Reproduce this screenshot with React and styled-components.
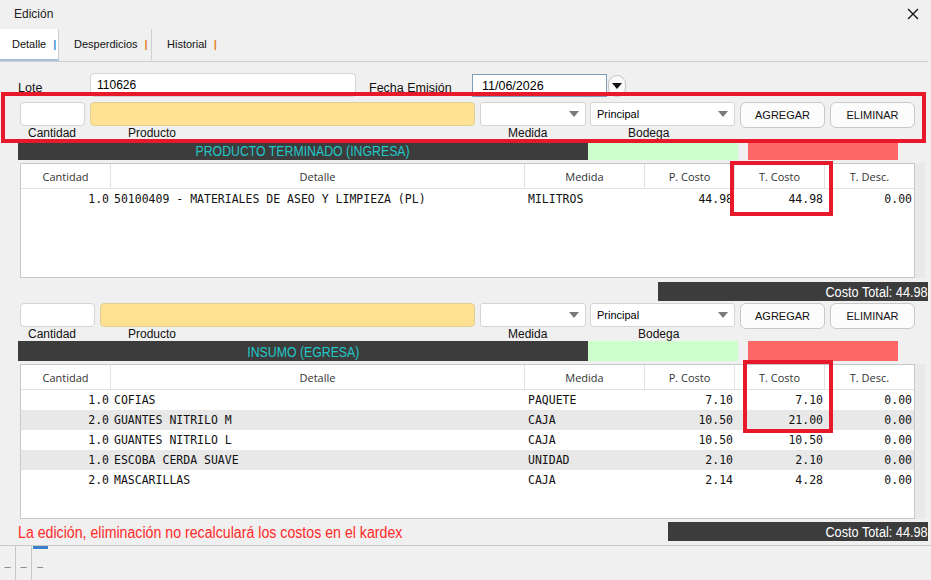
import React from 'react';
import styled, { createGlobalStyle } from 'styled-components';

const GlobalStyle = createGlobalStyle`
  body {
    margin: 0;
    background: #f0f0f0;
    font-family: "Liberation Sans", Arial, sans-serif;
  }
`;

const Window = styled.div`
  position: relative;
  width: 931px;
  height: 580px;
  overflow: hidden;
  background: #f0f0f0;
  color: #000;
`;

const TitleBar = styled.div`
  height: 29px;
  display: flex;
  align-items: center;
  justify-content: space-between;
  padding: 0 12px 2px 14px;
  box-sizing: border-box;
  font-size: 12px;
  color: #222;
`;

const TabBar = styled.div`
  height: 33px;
  margin-right: 3px;
  display: flex;
  border-bottom: 1px solid #cfcfcf;
  box-sizing: border-box;
`;

const Tab = styled.div`
  width: ${p => p.w}px;
  display: flex;
  align-items: center;
  padding-left: ${p => p.pl}px;
  box-sizing: border-box;
  font-size: 11px;
  color: #111;
  background: ${p => (p.active ? '#fff' : 'transparent')};
  border-right: ${p => (p.sep ? '1px solid #cfcfcf' : 'none')};
  border-bottom: ${p => (p.active ? '2px solid #a3c0dd' : '2px solid transparent')};
`;

const TabMark = styled.span`
  margin-left: 7px;
  color: ${p => p.color};
  font-weight: bold;
`;

const Content = styled.div`
  padding: 0 0 0 18px;
`;

const LoteRow = styled.div`
  display: flex;
  align-items: flex-end;
  margin-top: 10px;
  height: 25px;
`;

const Label = styled.div`
  font-size: 12.5px;
  color: #111;
  width: ${p => p.w}px;
  margin-left: ${p => p.ml || 0}px;
  padding-bottom: 2px;
`;

const TextInput = styled.div`
  width: ${p => p.w}px;
  height: 24px;
  box-sizing: border-box;
  background: ${p => p.bg || '#fff'};
  border: 1px solid ${p => p.border || '#d4d4d4'};
  border-radius: 4px;
  font-size: 12px;
  display: flex;
  align-items: center;
  padding-left: 6px;
`;

const DateBox = styled.div`
  display: flex;
  align-items: center;
  margin-left: 19px;
  gap: 1px;
`;

const DateInput = styled.div`
  width: 135px;
  height: 23px;
  box-sizing: border-box;
  background: #fff;
  border: 1px solid #7f9db9;
  font-size: 12.5px;
  display: flex;
  align-items: center;
  padding-left: 9px;
`;

const DateButton = styled.div`
  width: 18px;
  height: 22px;
  box-sizing: border-box;
  border: 1px solid #c4c4c4;
  border-radius: 9px;
  background: #fafafa;
  display: flex;
  align-items: center;
  justify-content: center;
`;

const EntryRow = styled.div`
  display: flex;
  align-items: flex-start;
  margin-top: ${p => p.mt}px;
  padding-left: 2px;
  height: 38px;
`;

const Field = styled.div`
  display: flex;
  flex-direction: column;
  margin-right: ${p => p.mr}px;
`;

const FieldLabel = styled.div`
  font-size: 12px;
  color: #111;
  padding-left: ${p => p.pl}px;
  margin-top: 1px;
  line-height: 13px;
`;

const Select = styled.div`
  width: ${p => p.w}px;
  height: 24px;
  box-sizing: border-box;
  background: #fff;
  border: 1px solid #d4d4d4;
  border-radius: 3px;
  font-size: 11px;
  display: flex;
  align-items: center;
  padding: 0 6px 0 6px;
  &::after {
    content: '';
    margin-left: auto;
    border-left: 5px solid transparent;
    border-right: 5px solid transparent;
    border-top: 6px solid #7a7a7a;
  }
`;

const Button = styled.div`
  width: 85px;
  height: 26px;
  box-sizing: border-box;
  margin-right: 5px;
  border: 1px solid #c8c8c8;
  border-radius: 6px;
  background: #fcfcfc;
  font-size: 11px;
  display: flex;
  align-items: center;
  justify-content: center;
  color: #111;
`;

const Narrow = styled.span`
  display: inline-block;
  white-space: nowrap;
  font-family: "Liberation Sans", Arial, sans-serif;
  font-size: ${p => p.size}px;
  transform: scaleX(0.82);
  transform-origin: ${p => p.origin || 'center'};
`;

const SectionBar = styled.div`
  display: flex;
  height: 20px;
`;

const SectionTitle = styled.div`
  width: 570px;
  background: #3c3c3c;
  color: #22c7c7;
  display: flex;
  align-items: center;
  justify-content: center;
`;

const Swatch = styled.div`
  width: 150px;
  background: ${p => p.color};
  margin-right: ${p => p.mr || 0}px;
`;

const TableWrap = styled.div`
  display: flex;
  margin-top: 3px;
  padding-left: 2px;
`;

const Table = styled.div`
  width: 895px;
  height: ${p => p.h}px;
  box-sizing: border-box;
  border: 1px solid #c8c8c8;
  background: #fff;
  overflow: hidden;
`;

const ScrollStrip = styled.div`
  width: 10px;
  background: #e9e9e9;
`;

const Grid = styled.div`
  display: grid;
  grid-template-columns: 90px 414px 120px 90px 90px 89px;
`;

const HeadCell = styled.div`
  height: 24px;
  border-bottom: 1px solid #e2e2e2;
  border-right: ${p => (p.last ? 'none' : '1px solid #e2e2e2')};
  font-family: "Open Sans", sans-serif;
  font-size: 11px;
  color: #333;
  display: flex;
  align-items: center;
  justify-content: center;
`;

const Cell = styled.div`
  height: 20px;
  font-family: "DejaVu Sans Mono", "Liberation Mono", monospace;
  font-size: 11.5px;
  color: #111;
  display: flex;
  align-items: center;
  justify-content: ${p => (p.right ? 'flex-end' : 'flex-start')};
  padding: 0 ${p => (p.right ? 2 : 3)}px 0 ${p => (p.right ? 0 : 3)}px;
  background: ${p => (p.alt ? '#e8e8e8' : '#fff')};
`;

const TotalRow = styled.div`
  display: flex;
  justify-content: ${p => (p.note ? 'space-between' : 'flex-end')};
  align-items: flex-start;
  margin-top: ${p => p.mt}px;
  margin-right: 3px;
  height: 20px;
`;

const TotalBar = styled.div`
  width: ${p => p.w}px;
  height: 19px;
  background: #3c3c3c;
  color: #fff;
  display: flex;
  align-items: center;
  justify-content: flex-end;
  overflow: hidden;
`;

const Note = styled.div`
  color: #ff2a2a;
  height: 20px;
  display: flex;
  align-items: center;
`;

const BottomBar = styled.div`
  margin-top: 3px;
  border-top: 1px solid #c8c8c8;
  height: 34px;
  display: flex;
`;

const MiniTab = styled.div`
  width: 16px;
  position: relative;
  border-right: ${p => (p.sep ? '1px solid #c8c8c8' : 'none')};
  color: #777;
  font-size: 11px;
  display: flex;
  align-items: flex-end;
  justify-content: center;
  padding-bottom: 8px;
  box-sizing: border-box;
  ${p => p.active && `
    &::before {
      content: '';
      position: absolute;
      left: 1px;
      top: 0;
      width: 15px;
      height: 3px;
      background: #3b7fc9;
    }
  `}
`;

const Highlight = styled.div`
  position: absolute;
  left: ${p => p.x}px;
  top: ${p => p.y}px;
  width: ${p => p.w}px;
  height: ${p => p.h}px;
  box-sizing: border-box;
  border: 4px solid #e8192a;
  pointer-events: none;
`;

const headers = ['Cantidad', 'Detalle', 'Medida', 'P. Costo', 'T. Costo', 'T. Desc.'];

const producto = [
  ['1.0', '50100409 - MATERIALES DE ASEO Y LIMPIEZA (PL)', 'MILITROS', '44.98', '44.98', '0.00'],
];

const insumos = [
  ['1.0', 'COFIAS', 'PAQUETE', '7.10', '7.10', '0.00'],
  ['2.0', 'GUANTES NITRILO M', 'CAJA', '10.50', '21.00', '0.00'],
  ['1.0', 'GUANTES NITRILO L', 'CAJA', '10.50', '10.50', '0.00'],
  ['1.0', 'ESCOBA CERDA SUAVE', 'UNIDAD', '2.10', '2.10', '0.00'],
  ['2.0', 'MASCARILLAS', 'CAJA', '2.14', '4.28', '0.00'],
];

const DataTable = ({ rows, h }) => (
  <TableWrap>
    <Table h={h}>
      <Grid>
        {headers.map((t, i) => (
          <HeadCell key={t} last={i === headers.length - 1}>{t}</HeadCell>
        ))}
        {rows.map((r, ri) =>
          r.map((v, ci) => (
            <Cell key={`${ri}-${ci}`} alt={ri % 2 === 1} right={[0, 3, 4, 5].includes(ci)}>
              {v}
            </Cell>
          ))
        )}
      </Grid>
    </Table>
    <ScrollStrip />
  </TableWrap>
);

const Entry = ({ mt, cantW, prodW, bodegaPl, prodPl }) => (
  <EntryRow mt={mt}>
    <Field mr={5}>
      <TextInput w={cantW} />
      <FieldLabel pl={8}>Cantidad</FieldLabel>
    </Field>
    <Field mr={5}>
      <TextInput w={prodW} bg="#fee292" border="#e2cf98" />
      <FieldLabel pl={prodPl}>Producto</FieldLabel>
    </Field>
    <Field mr={4}>
      <Select w={106} />
      <FieldLabel pl={28}>Medida</FieldLabel>
    </Field>
    <Field mr={5}>
      <Select w={145}>Principal</Select>
      <FieldLabel pl={bodegaPl}>Bodega</FieldLabel>
    </Field>
    <Button>AGREGAR</Button>
    <Button>ELIMINAR</Button>
  </EntryRow>
);

const Section = ({ title }) => (
  <SectionBar>
    <SectionTitle>
      <Narrow size={15}>{title}</Narrow>
    </SectionTitle>
    <Swatch color="#ccffcc" mr={10} />
    <Swatch color="#ff6666" />
  </SectionBar>
);

const CloseIcon = () => (
  <svg width="12" height="12" viewBox="0 0 12 12">
    <path d="M1 1 L11 11 M11 1 L1 11" stroke="#111" strokeWidth="1.3" />
  </svg>
);

const App = () => {
  return (
    <Window>
      <GlobalStyle />
      <TitleBar>
        <span>Edición</span>
        <CloseIcon />
      </TitleBar>
      <TabBar>
        <Tab w={59} pl={12} active sep>
          Detalle<TabMark color="#3d8fd6">|</TabMark>
        </Tab>
        <Tab w={93} pl={15} sep>
          Desperdicios<TabMark color="#e0832b">|</TabMark>
        </Tab>
        <Tab w={90} pl={15}>
          Historial<TabMark color="#e0832b">|</TabMark>
        </Tab>
      </TabBar>
      <Content>
        <LoteRow>
          <Label w={72}>Lote</Label>
          <TextInput w={266}>110626</TextInput>
          <Label w={84} ml={13}>Fecha Emisión</Label>
          <DateBox>
            <DateInput>11/06/2026</DateInput>
            <DateButton>
              <svg width="10" height="6" viewBox="0 0 10 6">
                <path d="M0 0 H10 L5 6 Z" fill="#111" />
              </svg>
            </DateButton>
          </DateBox>
        </LoteRow>
        <Entry mt={5} cantW={65} prodW={385} prodPl={38} bodegaPl={38} />
        <Section title="PRODUCTO TERMINADO (INGRESA)" />
        <DataTable rows={producto} h={115} />
        <TotalRow mt={4}>
          <TotalBar w={270}>
            <Narrow size={15.5} origin="right">Costo Total: 44.98</Narrow>
          </TotalBar>
        </TotalRow>
        <Entry mt={1} cantW={75} prodW={375} prodPl={28} bodegaPl={48} />
        <Section title="INSUMO (EGRESA)" />
        <DataTable rows={insumos} h={155} />
        <TotalRow mt={3} note>
          <Note>
            <Narrow size={17.3} origin="left">La edición, eliminación no recalculará los costos en el kardex</Narrow>
          </Note>
          <TotalBar w={260}>
            <Narrow size={15.5} origin="right">Costo Total: 44.98</Narrow>
          </TotalBar>
        </TotalRow>
      </Content>
      <BottomBar>
        <MiniTab sep>–</MiniTab>
        <MiniTab sep>–</MiniTab>
        <MiniTab active>–</MiniTab>
      </BottomBar>
      <Highlight x={1} y={92} w={925} h={51} />
      <Highlight x={730} y={161} w={103} h={55} />
      <Highlight x={743} y={360} w={90} h={73} />
    </Window>
  );
};

export default App;
